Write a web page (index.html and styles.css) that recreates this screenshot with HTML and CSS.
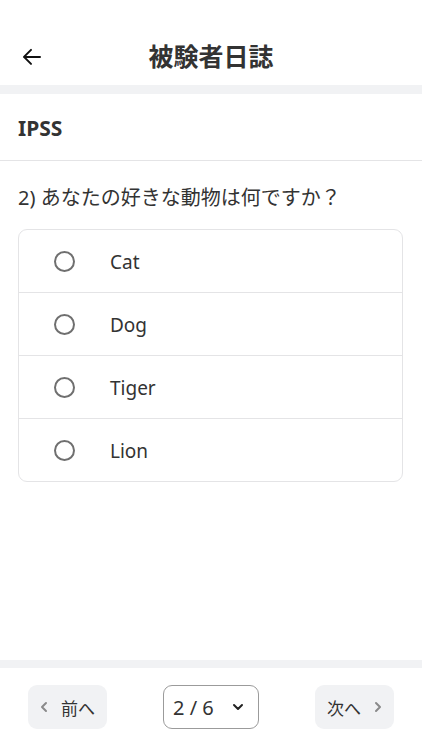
FILE: index.html
```html
<!DOCTYPE html>
<html lang="ja">
<head>
<meta charset="utf-8">
<title>被験者日誌</title>
<link rel="stylesheet" href="styles.css">
</head>
<body>
<div class="app">
  <div class="status"></div>
  <header class="header">
    <button class="back" aria-label="戻る">
      <svg width="20" height="18" viewBox="0 0 20 18" fill="none" stroke="#111" stroke-width="2" stroke-linecap="round" stroke-linejoin="round"><path d="M18 9H2M9 2L2 9l7 7"/></svg>
    </button>
    <h1 class="title">被験者日誌</h1>
  </header>
  <div class="band"></div>
  <main class="main">
    <div class="section-title">IPSS</div>
    <div class="question">2) あなたの好きな動物は何ですか？</div>
    <div class="card">
      <label class="option"><span class="radio"></span><span class="opt-text">Cat</span></label>
      <label class="option"><span class="radio"></span><span class="opt-text">Dog</span></label>
      <label class="option"><span class="radio"></span><span class="opt-text">Tiger</span></label>
      <label class="option"><span class="radio"></span><span class="opt-text">Lion</span></label>
    </div>
  </main>
  <div class="band band-bottom"></div>
  <footer class="footer">
    <button class="nav-btn">
      <svg class="chev" width="8" height="12" viewBox="0 0 8 12" fill="none" stroke="#8a8a8a" stroke-width="2" stroke-linecap="round" stroke-linejoin="round"><path d="M6 2L2 6l4 4"/></svg>
      <span>前へ</span>
    </button>
    <button class="page-select">
      <span>2 / 6</span>
      <svg width="12" height="8" viewBox="0 0 12 8" fill="none" stroke="#222" stroke-width="2" stroke-linecap="round" stroke-linejoin="round"><path d="M2 2l4 4 4-4"/></svg>
    </button>
    <button class="nav-btn">
      <span>次へ</span>
      <svg class="chev" width="8" height="12" viewBox="0 0 8 12" fill="none" stroke="#8a8a8a" stroke-width="2" stroke-linecap="round" stroke-linejoin="round"><path d="M2 2l4 4-4 4"/></svg>
    </button>
  </footer>
</div>
</body>
</html>
```
FILE: styles.css
```css
* { box-sizing: border-box; }
html, body { margin: 0; padding: 0; background: #fff; }
body {
  font-family: "Noto Sans", "Noto Sans CJK JP", sans-serif;
  color: #333;
}
.app {
  width: 422px;
  height: 750px;
  display: flex;
  flex-direction: column;
  overflow: hidden;
}
.status { height: 30px; flex: none; }
.header {
  height: 55px;
  flex: none;
  display: flex;
  align-items: center;
  justify-content: center;
  position: relative;
}
.back {
  position: absolute;
  left: 20px;
  top: 50%;
  transform: translateY(-55%);
  background: none;
  border: 0;
  padding: 2px;
  display: flex;
}
.title {
  margin: 0;
  font-size: 25px;
  font-weight: 700;
  color: #333;
  line-height: 1;
  transform: translateY(-1px);
}
.band { height: 9px; background: #f1f2f4; flex: none; }
.main { flex: 1; display: flex; flex-direction: column; }
.section-title {
  height: 67px;
  display: flex;
  align-items: center;
  padding-left: 18px;
  font-size: 21px;
  font-weight: 700;
  border-bottom: 1px solid #e4e4e6;
  padding-top: 2px;
}
.question {
  padding: 22px 18px 0;
  font-size: 20px;
  line-height: 30px;
  color: #333;
}
.card {
  margin: 16px 19px 0 18px;
  border: 1px solid #e4e4e6;
  border-radius: 9px;
  display: flex;
  flex-direction: column;
}
.option {
  height: 63px;
  display: flex;
  align-items: center;
  padding-left: 35px;
  gap: 35px;
  border-top: 1px solid #e4e4e6;
}
.option:first-child { border-top: 0; height: 62px; }
.radio {
  width: 21px;
  height: 21px;
  border: 2px solid #6f6f6f;
  border-radius: 50%;
  flex: none;
}
.opt-text { font-size: 19px; color: #333; padding-top: 2px; }
.band-bottom { height: 8px; }
.footer {
  height: 82px;
  flex: none;
  display: flex;
  justify-content: space-between;
  align-items: flex-start;
  padding: 17px 28px 0 28px;
}
button { font-family: inherit; color: inherit; cursor: pointer; }
.nav-btn {
  width: 79px;
  height: 44px;
  background: #f1f2f4;
  border: 0;
  border-radius: 9px;
  display: flex;
  align-items: center;
  justify-content: center;
  gap: 13px;
  font-size: 17px;
  color: #333;
  padding: 0;
}
.page-select {
  width: 96px;
  height: 44px;
  background: #fff;
  border: 1px solid #9b9b9b;
  border-radius: 9px;
  display: flex;
  align-items: center;
  justify-content: flex-start;
  gap: 18px;
  font-size: 20px;
  color: #333;
  padding: 0 0 0 9px;
}
```
